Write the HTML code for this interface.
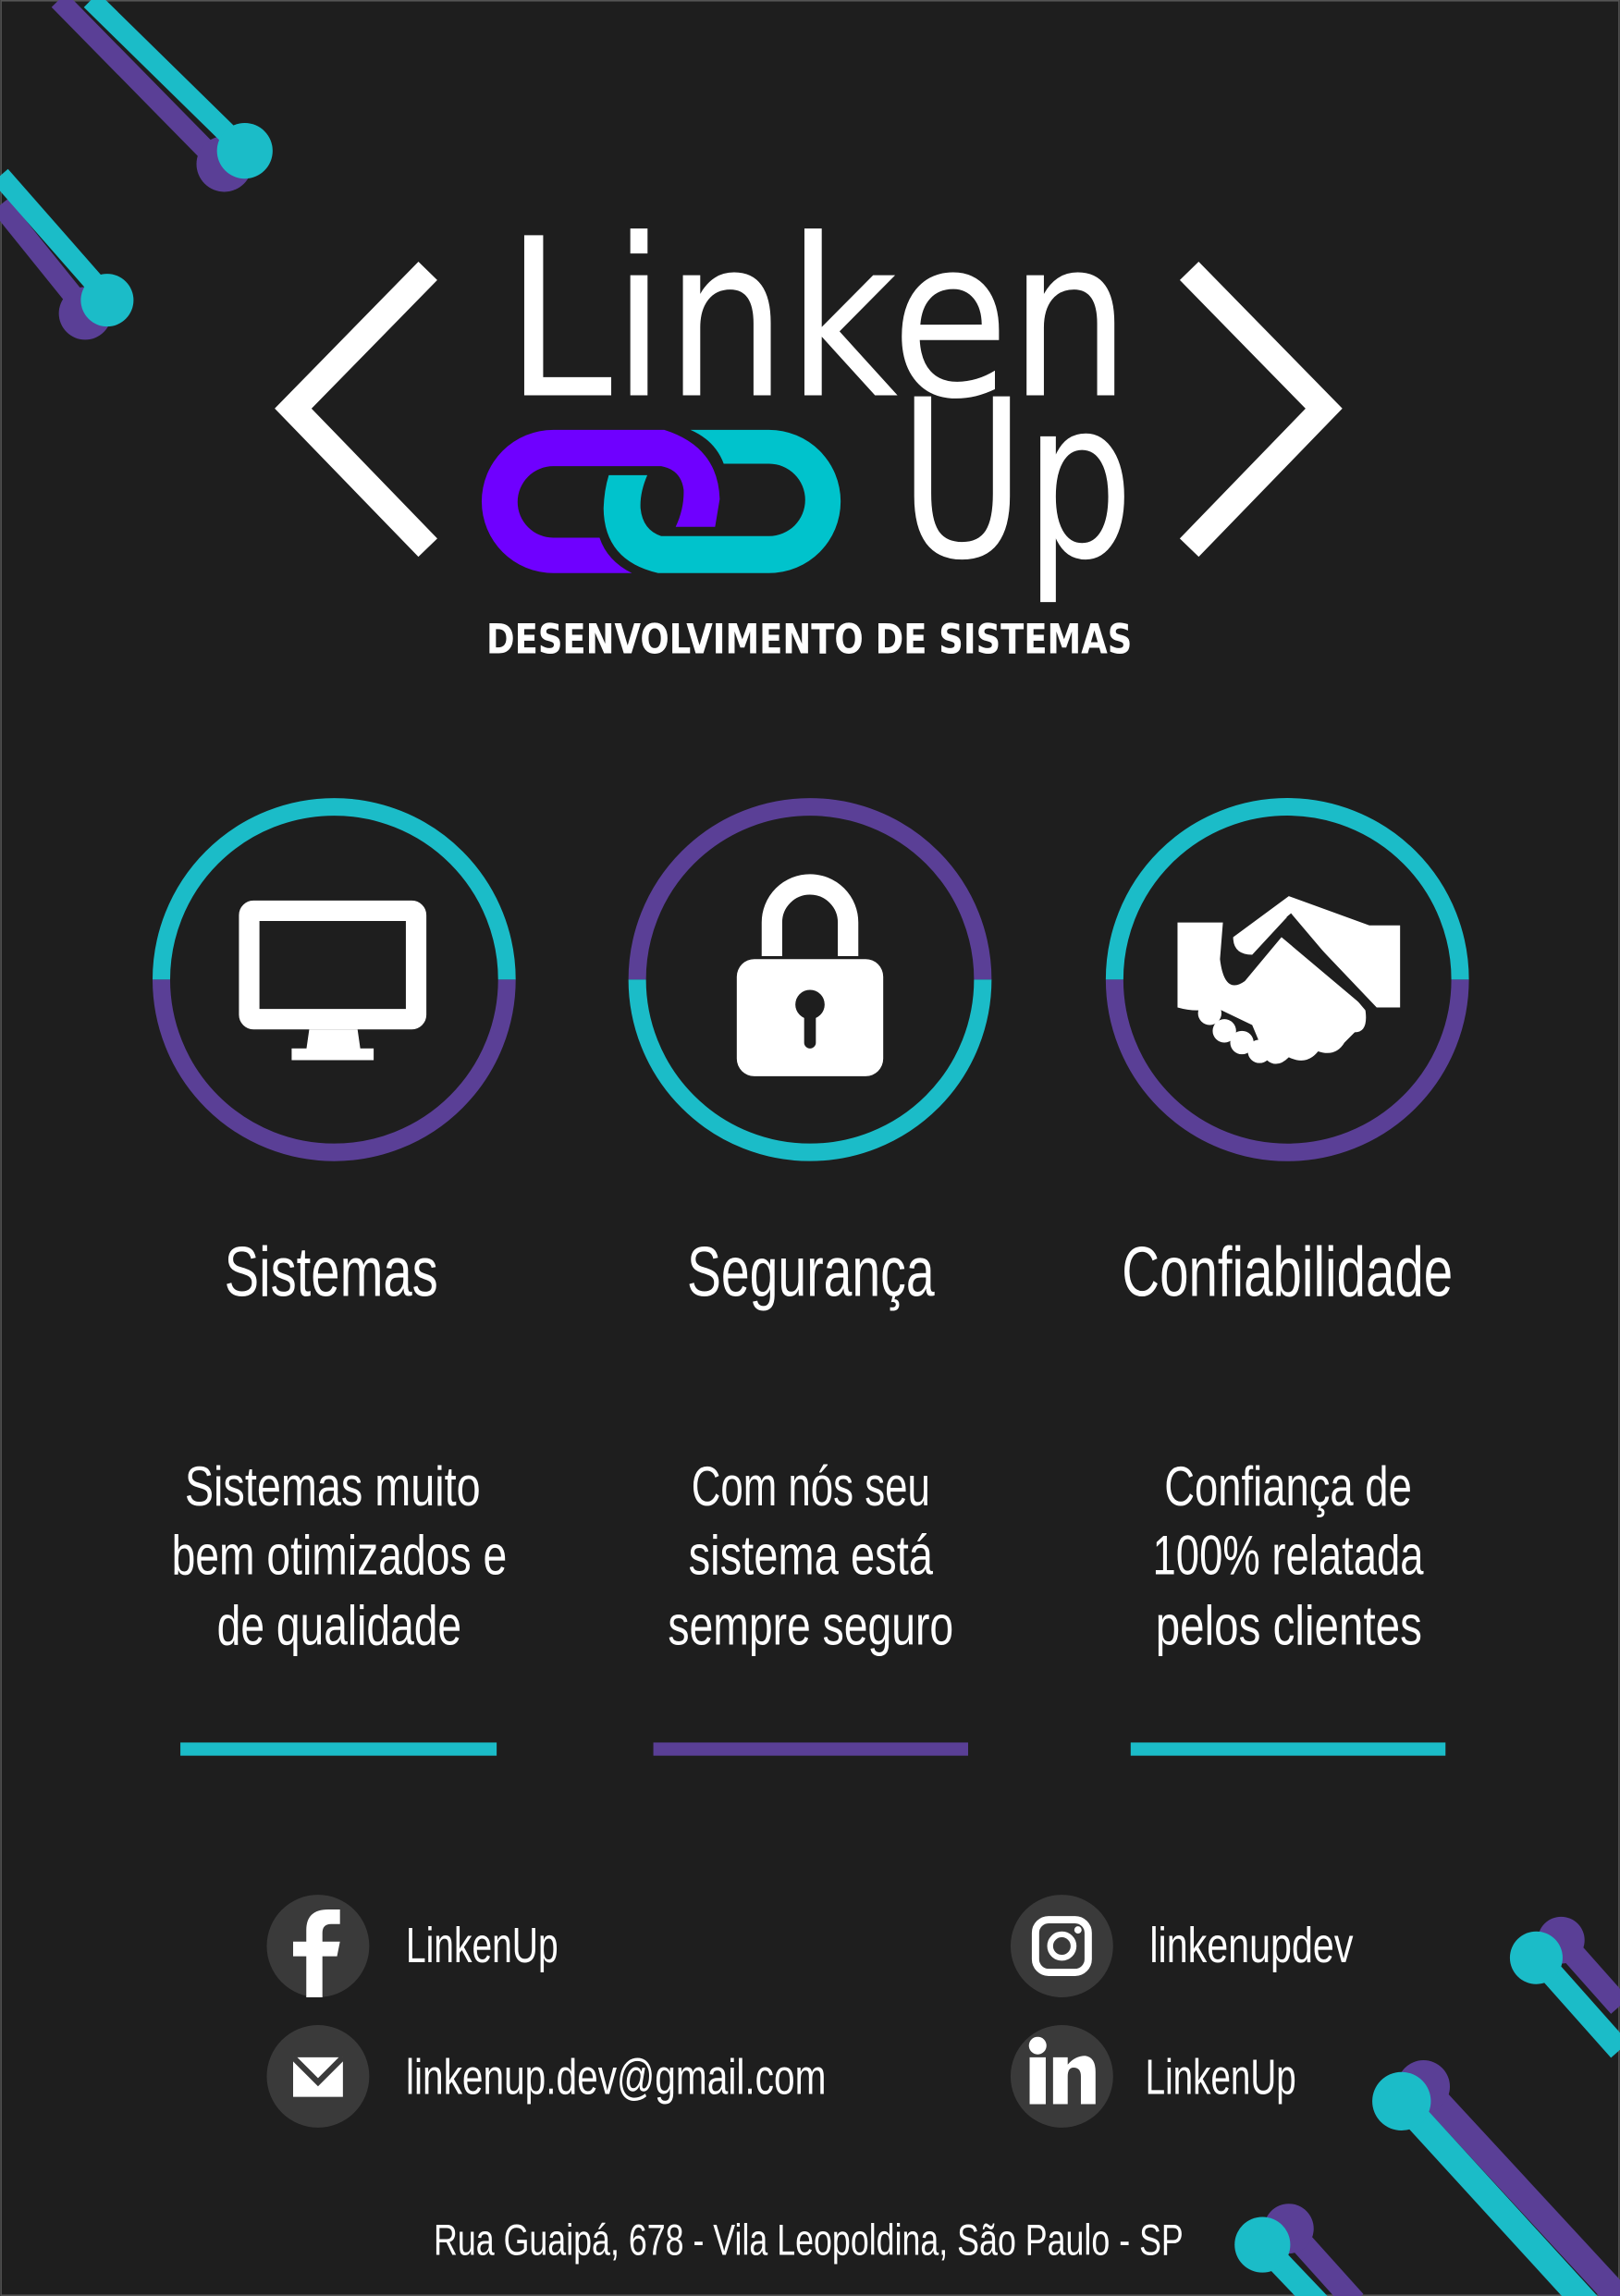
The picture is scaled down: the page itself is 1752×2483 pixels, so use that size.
<!DOCTYPE html>
<html><head><meta charset="utf-8"><style>
html,body{margin:0;padding:0;background:#1e1e1e}
svg{display:block}
text{font-family:"Liberation Sans Narrow","Liberation Sans",sans-serif;fill:#fff}
</style></head><body>
<svg width="1752" height="2483" viewBox="0 0 1106 1568" xmlns="http://www.w3.org/2000/svg">
<rect x="0.5" y="0.5" width="1105" height="1567" fill="#1e1e1e" stroke="#555" stroke-width="1"/>
<!-- top-left decorations -->
<g stroke-linecap="butt">
<line x1="40" y1="0" x2="152" y2="114" stroke="#5a3f96" stroke-width="14"/>
<circle cx="153" cy="112" r="19" fill="#5a3f96"/>
<line x1="62" y1="0" x2="166" y2="102" stroke="#1bbcc8" stroke-width="14"/>
<circle cx="167" cy="103" r="19" fill="#1bbcc8"/>
<line x1="0" y1="140" x2="58" y2="212" stroke="#5a3f96" stroke-width="14"/>
<circle cx="58" cy="214" r="18" fill="#5a3f96"/>
<line x1="0" y1="120" x2="72" y2="202" stroke="#1bbcc8" stroke-width="14"/>
<circle cx="73" cy="205" r="18" fill="#1bbcc8"/>
</g>
<!-- bottom-right decorations -->
<g>
<line x1="1066" y1="1325" x2="1106" y2="1370" stroke="#5a3f96" stroke-width="16"/>
<circle cx="1066" cy="1325" r="16" fill="#5a3f96"/>
<line x1="1050" y1="1337" x2="1106" y2="1400" stroke="#1bbcc8" stroke-width="16"/>
<circle cx="1049" cy="1337" r="18" fill="#1bbcc8"/>
<line x1="972" y1="1425" x2="1106" y2="1570" stroke="#5a3f96" stroke-width="18"/>
<circle cx="972" cy="1425" r="18" fill="#5a3f96"/>
<line x1="957" y1="1435" x2="1085" y2="1575" stroke="#1bbcc8" stroke-width="18"/>
<circle cx="957" cy="1435" r="20" fill="#1bbcc8"/>
<line x1="880" y1="1522" x2="925" y2="1572" stroke="#5a3f96" stroke-width="16"/>
<circle cx="880" cy="1522" r="17" fill="#5a3f96"/>
<line x1="862" y1="1533" x2="902" y2="1575" stroke="#1bbcc8" stroke-width="16"/>
<circle cx="862" cy="1533" r="19" fill="#1bbcc8"/>
</g>
<!-- logo -->
<polyline points="292,185 200,279 292,374" fill="none" stroke="#fff" stroke-width="18" stroke-linejoin="miter"/>
<polyline points="812,185 904,279 812,374" fill="none" stroke="#fff" stroke-width="18" stroke-linejoin="miter"/>
<text x="345" y="270" font-size="150" textLength="427" lengthAdjust="spacingAndGlyphs" style="font-family:'DejaVu Sans',sans-serif">Linken</text>
<text x="614" y="380" font-size="150" textLength="160" lengthAdjust="spacingAndGlyphs" style="font-family:'DejaVu Sans',sans-serif">Up</text>
<g transform="translate(321.95,284.07) scale(0.21042)">
<path fill="#6f00ff" fill-rule="evenodd" d="M520,510 L265,510 A232,232 0 0 1 265,45 L625,45 Q800,100 805,270 L790,360 L662,360 Q690,300 688,240 Q680,175 615,163 L265,163 A115,115 0 0 0 265,395 L415,395 Q440,470 520,510 Z"/>
<path fill="#00c3cc" d="M710,45 L965,45 A232,232 0 0 1 965,510 L605,510 Q430,470 428,300 Q430,240 445,192 L570,192 Q545,250 548,300 Q555,370 615,390 L965,390 A117,117 0 0 0 965,155 L818,155 Q790,80 710,45 Z"/>
</g>
<text x="332" y="446" font-size="28" font-weight="bold" textLength="441" lengthAdjust="spacingAndGlyphs" style="font-family:'DejaVu Sans',sans-serif">DESENVOLVIMENTO DE SISTEMAS</text>
<!-- circles -->
<g fill="none" stroke-width="12">
<path d="M110,669 A118,118 0 0 1 346,669" stroke="#1bbcc8"/>
<path d="M110,669 A118,118 0 0 0 346,669" stroke="#5a3f96"/>
<path d="M435,669 A118,118 0 0 1 671,669" stroke="#5a3f96"/>
<path d="M435,669 A118,118 0 0 0 671,669" stroke="#1bbcc8"/>
<path d="M761,669 A118,118 0 0 1 997,669" stroke="#1bbcc8"/>
<path d="M761,669 A118,118 0 0 0 997,669" stroke="#5a3f96"/>
</g>
<!-- monitor -->
<rect x="170" y="622" width="114" height="74" rx="3" fill="none" stroke="#fff" stroke-width="14"/>
<polygon points="211,703 244,703 246,717 209,717" fill="#fff"/>
<rect x="199" y="716" width="56" height="8" fill="#fff"/>
<!-- lock -->
<path d="M527,653 V630 A26,26 0 0 1 579,630 V653" fill="none" stroke="#fff" stroke-width="14"/>
<rect x="503" y="655" width="100" height="80" rx="12" fill="#fff"/>
<circle cx="553" cy="686" r="10" fill="#1e1e1e"/>
<rect x="549" y="686" width="8" height="30" rx="4" fill="#1e1e1e"/>
<!-- handshake -->
<g fill="#fff">
<path d="M804,630 H835 L833,655 Q836,680 850,670 L875,640 L932,688 Q935,705 925,705 L918,712 Q912,722 900,718 Q892,728 880,722 Q872,730 865,724 L855,700 L830,688 Q818,692 804,688 Z"/>
<path d="M842,640 L880,612 L935,632 H956 V688 H940 L880,625 L855,652 Q842,652 842,640 Z"/>
<circle cx="826" cy="692" r="8"/>
<circle cx="836" cy="704" r="8"/>
<circle cx="848" cy="712" r="8"/>
<circle cx="860" cy="718" r="8"/>
</g>
<path d="M880,625 L935,690" stroke="#1e1e1e" stroke-width="4"/>
<!-- headings -->
<text x="153" y="885" font-size="48" textLength="146" lengthAdjust="spacingAndGlyphs">Sistemas</text>
<text x="469" y="885" font-size="48" textLength="169" lengthAdjust="spacingAndGlyphs">Segurança</text>
<text x="766" y="885" font-size="48" textLength="226" lengthAdjust="spacingAndGlyphs">Confiabilidade</text>
<g font-size="38">
<text x="126" y="1028" textLength="202" lengthAdjust="spacingAndGlyphs">Sistemas muito</text>
<text x="117" y="1075" textLength="229" lengthAdjust="spacingAndGlyphs">bem otimizados e</text>
<text x="148" y="1123" textLength="167" lengthAdjust="spacingAndGlyphs">de qualidade</text>
<text x="472" y="1028" textLength="163" lengthAdjust="spacingAndGlyphs">Com nós seu</text>
<text x="470" y="1075" textLength="167" lengthAdjust="spacingAndGlyphs">sistema está</text>
<text x="456" y="1123" textLength="195" lengthAdjust="spacingAndGlyphs">sempre seguro</text>
<text x="795" y="1028" textLength="169" lengthAdjust="spacingAndGlyphs">Confiança de</text>
<text x="787" y="1075" textLength="185" lengthAdjust="spacingAndGlyphs">100% relatada</text>
<text x="789" y="1123" textLength="182" lengthAdjust="spacingAndGlyphs">pelos clientes</text>
</g>
<rect x="123" y="1190" width="216" height="9" fill="#1bbcc8"/>
<rect x="446" y="1190" width="215" height="9" fill="#5a3f96"/>
<rect x="772" y="1190" width="215" height="9" fill="#1bbcc8"/>
<!-- footer icons -->
<circle cx="217" cy="1329" r="35" fill="#3a3a3a"/>
<circle cx="217" cy="1418" r="35" fill="#3a3a3a"/>
<circle cx="725" cy="1329" r="35" fill="#3a3a3a"/>
<circle cx="725" cy="1418" r="35" fill="#3a3a3a"/>
<path d="M209,1364 V1336 H200 V1326 H209 V1318 Q209,1304 224,1304 H232 V1314 H226 Q220,1314 220,1320 V1326 H232 L230,1336 H220 V1364 Z" fill="#fff"/>
<rect x="200" y="1405" width="34" height="27" fill="#fff"/>
<path d="M200,1405 L217,1422 L234,1405" fill="none" stroke="#3a3a3a" stroke-width="4"/>
<rect x="707" y="1311" width="36" height="36" rx="9" fill="none" stroke="#fff" stroke-width="5"/>
<circle cx="725" cy="1329" r="8" fill="none" stroke="#fff" stroke-width="4"/>
<circle cx="736" cy="1318" r="2.5" fill="#fff"/>
<rect x="703" y="1405" width="11" height="32" fill="#fff"/>
<circle cx="708.5" cy="1397" r="6" fill="#fff"/>
<path d="M719,1437 V1405 H729 V1410 Q734,1404 741,1404 Q748,1405 748,1415 V1437 H738 V1418 Q738,1412 733,1412 Q729,1412 729,1418 V1437 Z" fill="#fff"/>
<g font-size="34">
<text x="277" y="1340" textLength="104" lengthAdjust="spacingAndGlyphs">LinkenUp</text>
<text x="277" y="1430" textLength="287" lengthAdjust="spacingAndGlyphs">linkenup.dev@gmail.com</text>
<text x="785" y="1340" textLength="139" lengthAdjust="spacingAndGlyphs">linkenupdev</text>
<text x="782" y="1430" textLength="103" lengthAdjust="spacingAndGlyphs">LinkenUp</text>
</g>
<text x="296" y="1540" font-size="30" textLength="512" lengthAdjust="spacingAndGlyphs">Rua Guaipá, 678 - Vila Leopoldina, São Paulo - SP</text>
</svg>
</body></html>
